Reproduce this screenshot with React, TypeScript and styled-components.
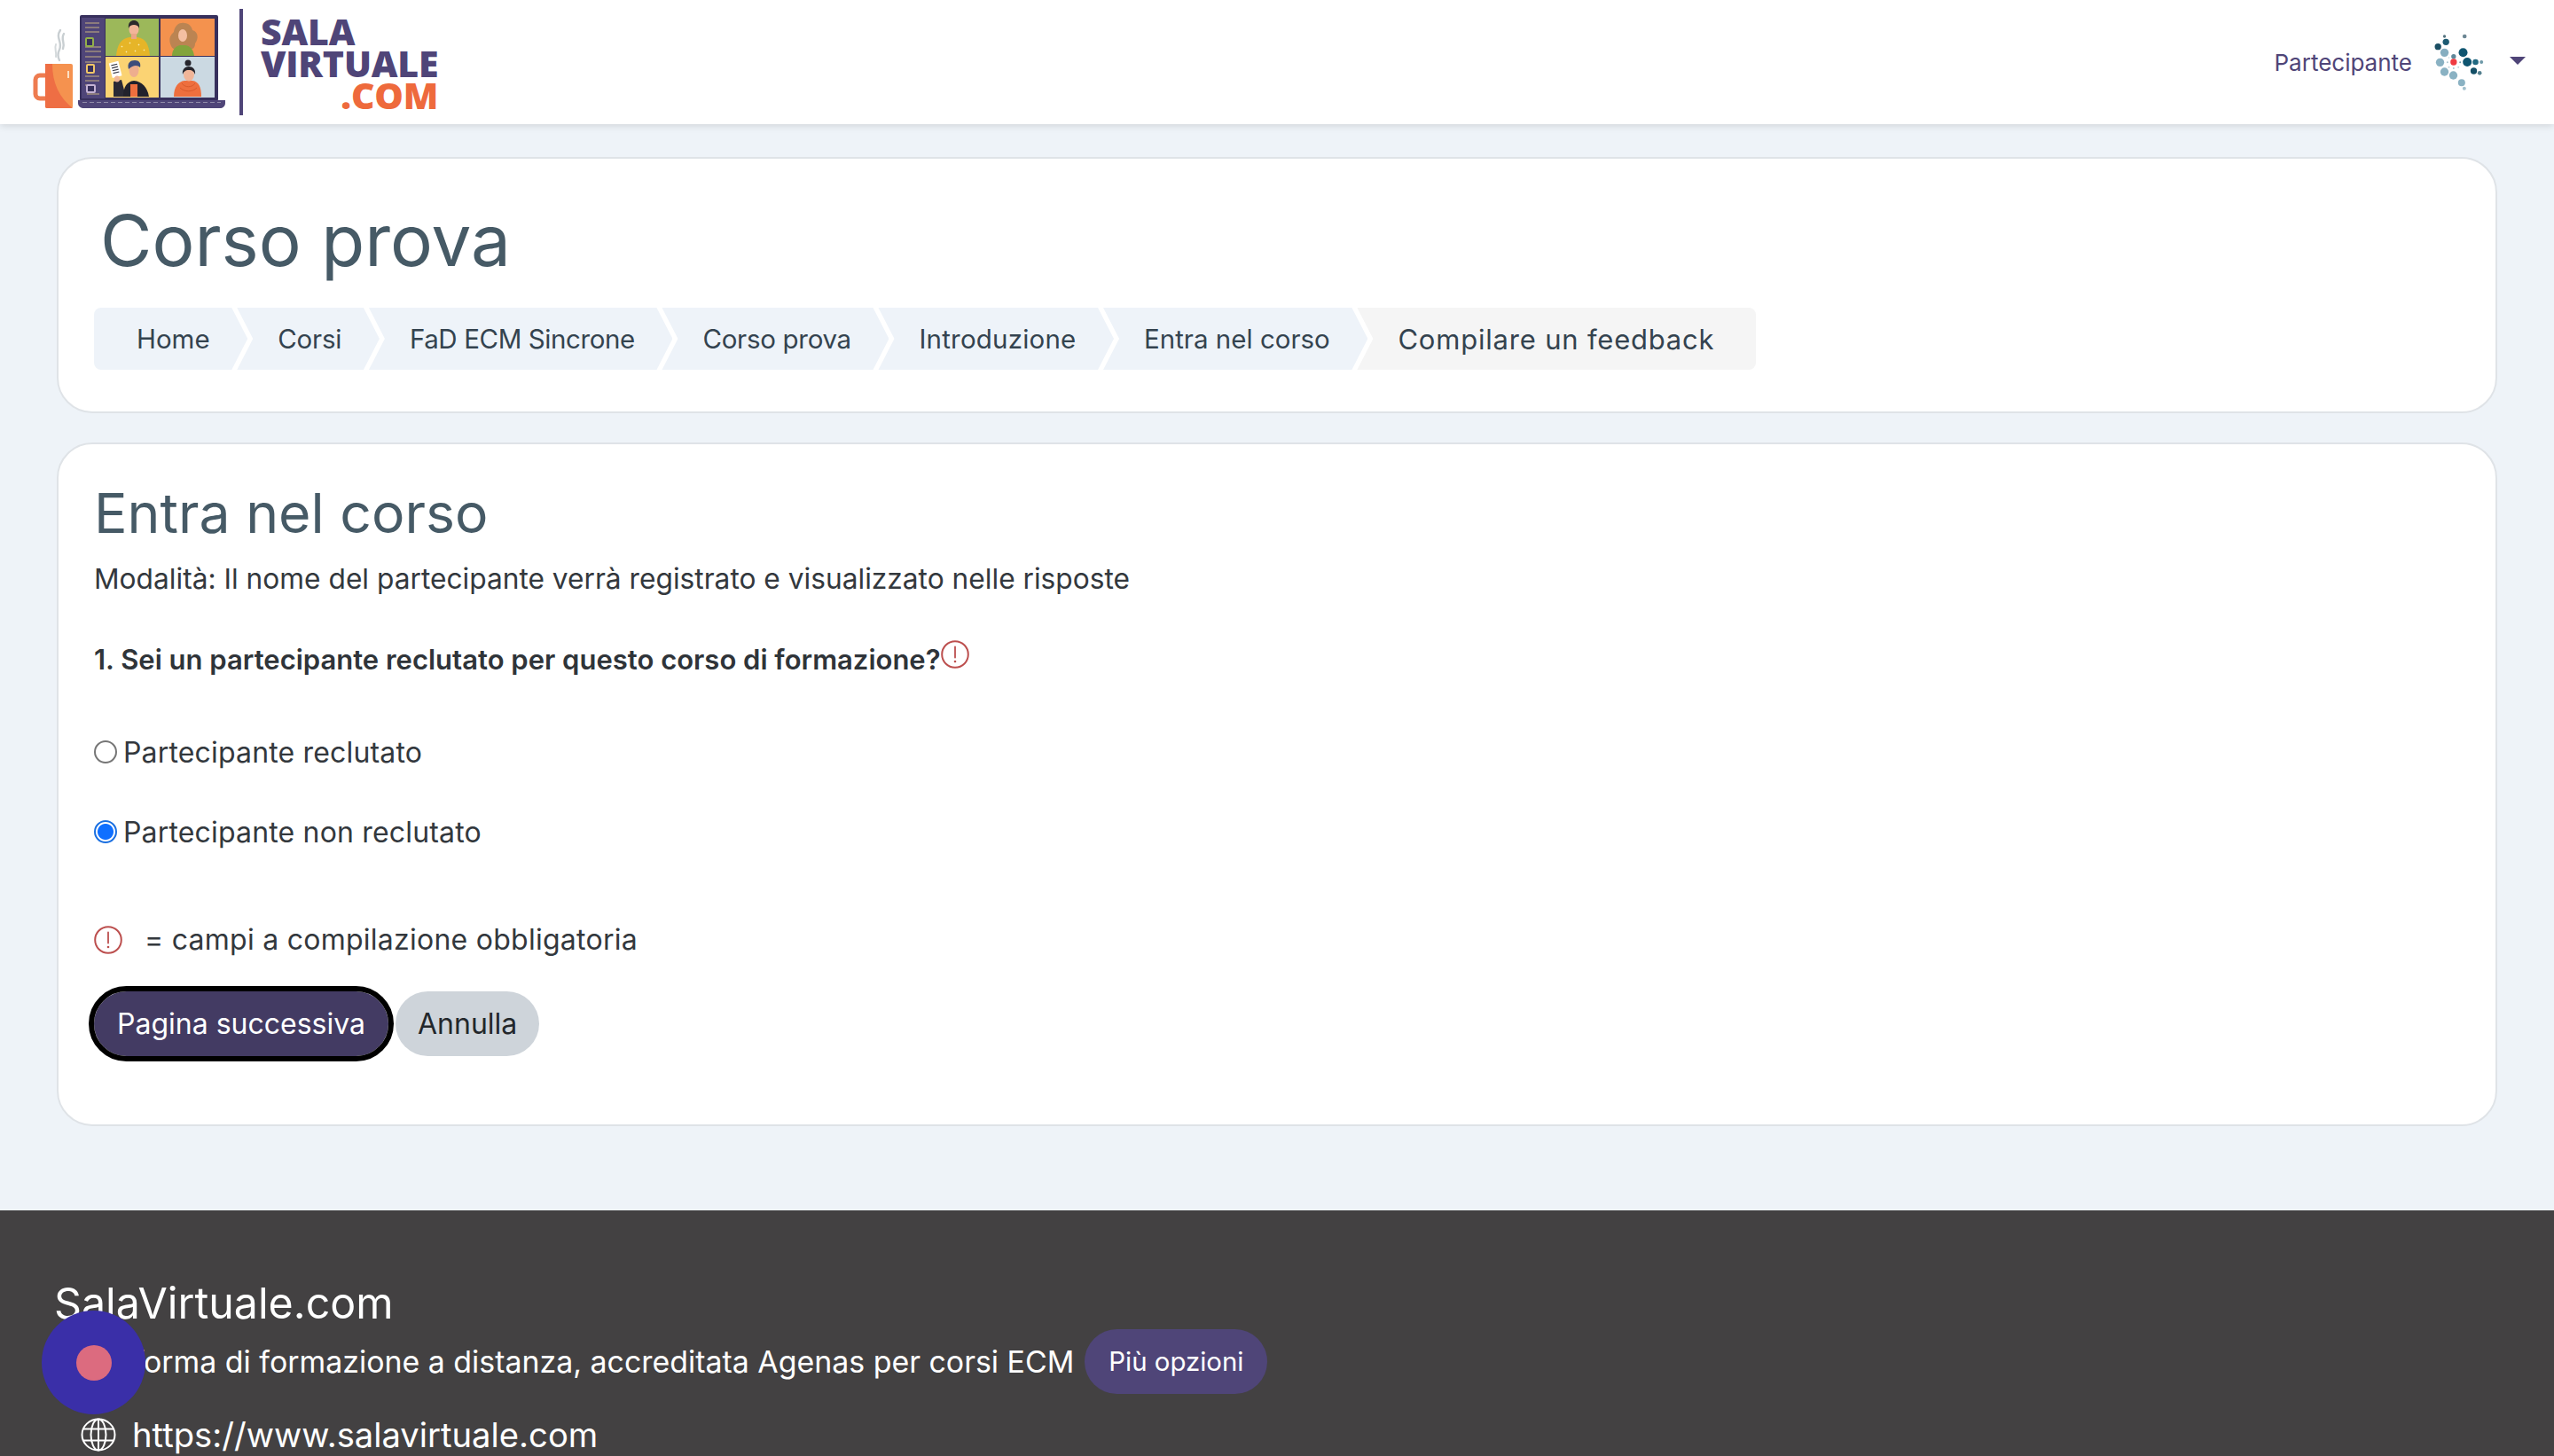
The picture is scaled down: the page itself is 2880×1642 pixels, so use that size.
import styled, { createGlobalStyle } from 'styled-components'

const GlobalStyle = createGlobalStyle`
  html, body {
    margin: 0;
    padding: 0;
    height: 100%;
    overflow: hidden;
    background: #eef3f8;
  }
  body {
    font-family: Inter, "Open Sans", sans-serif;
    color: #33383d;
  }
`

const crumbs: [string, number][] = [
  ['Home', 0],
  ['Corsi', -0.2],
  ['FaD ECM Sincrone', -0.4],
  ['Corso prova', -0.3],
  ['Introduzione', 0.2],
  ['Entra nel corso', 0],
]

function Logo() {
  return (
    <LogoGraphic viewBox="34 0 224 140">
      {/* steam */}
      <path d="M68 34c-6 9 3 13-1 22-2 4-2 8 0 12M72 38c-4 7 2 10-1 17" fill="none" stroke="#c9cfd2" strokeWidth="2.4" strokeLinecap="round" />
      <path d="M63 50c-2 5 1 8 0 14" fill="none" stroke="#d5dadc" strokeWidth="2" strokeLinecap="round" />
      {/* mug */}
      <rect x="40" y="85" width="16" height="26" rx="5" fill="none" stroke="#ee7c50" strokeWidth="5" />
      <rect x="51" y="72" width="31" height="50" rx="2" fill="#f5924f" />
      <path d="M51 72h8c0 22 8 38 23 50H53a2 2 0 0 1-2-2z" fill="#ee6e44" />
      <rect x="76" y="80" width="2" height="8" fill="#fbe0c4" />
      {/* laptop */}
      <rect x="90" y="17" width="156" height="97" rx="2" fill="#37305c" />
      <rect x="92" y="20" width="26" height="91" fill="#4f4578" />
      <path d="M96 26h16M96 31h16M96 36h16M96 53h18M96 58h18M96 64h18M96 70h18M96 86h16M96 91h16M96 96h8M98 106h14" stroke="#a08d7e" strokeWidth="1.4" />
      <rect x="97" y="43" width="8" height="9" rx="1" fill="#37305c" stroke="#93b04a" strokeWidth="2" />
      <rect x="98" y="73" width="8" height="9" rx="1" fill="#37305c" stroke="#f1c667" strokeWidth="2" />
      <rect x="98" y="96" width="9" height="8" rx="1" fill="#37305c" stroke="#c4b2d4" strokeWidth="2" />
      <rect x="119" y="21" width="60" height="42" fill="#9cb85a" />
      <rect x="181" y="21" width="61" height="42" fill="#f4924e" />
      <rect x="119" y="64" width="60" height="46" fill="#fbd373" />
      <rect x="181" y="64" width="61" height="46" fill="#cbd9e2" />
      {/* green tile */}
      <path d="M131 63c1-13 6-20 15-21h9c9 1 13 8 14 21z" fill="#e6b528" />
      <path d="M137 52l1 1M146 48l1 1M156 50l1 1M162 56l1 1M142 58l1 1M152 57l1 1" stroke="#fbeeb5" strokeWidth="1.5" />
      <ellipse cx="151" cy="33" rx="5.500" ry="7" fill="#f2b598" />
      <rect x="148" y="38" width="6" height="6" fill="#eaa688" />
      <path d="M145 32c-1-7 3-9 6-9s7 2 6 9c-1-3-3-4-6-4s-5 1-6 4z" fill="#2c2a2c" />
      {/* orange tile */}
      <path d="M193 52c-4-9 0-13 3-16 1-8 7-11 12-10 5 0 8 4 9 8 7 2 7 10 3 15 0 5-3 7-7 7h-14c-3 0-5-2-6-4z" fill="#bb8452" />
      <ellipse cx="206" cy="40" rx="5" ry="7" fill="#f4bfa2" />
      <path d="M194 63c0-7 4-11 9-12h6c6 1 9 5 10 12z" fill="#82a43c" />
      {/* yellow tile */}
      <path d="M128 109V92l9-2 5 19z" fill="#2a2a36" />
      <path d="M139 109c0-11 4-17 12-18 9 1 15 7 17 18z" fill="#22222c" />
      <rect x="147" y="95" width="8" height="14" fill="#ee6f3e" />
      <ellipse cx="151" cy="79" rx="5.500" ry="8" fill="#eeae8e" />
      <path d="M145 78c-2-7 2-10 7-10s7 3 6 8c-3-3-8-3-13 2z" fill="#3d4d7b" />
      <g transform="rotate(-14 130 80)">
        <rect x="125" y="70" width="11" height="17" fill="#fff" />
        <path d="M127 73h7M127 76h7M127 79h7M127 82h7" stroke="#3c3c48" strokeWidth="1.2" />
      </g>
      <ellipse cx="132" cy="89" rx="3" ry="3.500" fill="#f1b596" />
      {/* blue tile */}
      <path d="M196 109c0-11 5-17 12-18h9c7 1 10 7 10 18z" fill="#ee6f3e" />
      <path d="M205 94c4 5 11 5 15 0M203 99c5 5 14 5 19 0" fill="none" stroke="#d85a2c" strokeWidth="1" />
      <circle cx="212" cy="71" r="3.500" fill="#26252c" />
      <ellipse cx="213" cy="84" rx="6" ry="7.500" fill="#f0b598" />
      <path d="M206 84c-1-6 3-9 7-9s8 3 7 9c-1-3-3-5-7-5s-6 2-7 5z" fill="#26252c" />
      {/* base */}
      <path d="M88 113h166v3c0 4-3 6-6 6H95c-4 0-7-2-7-6z" fill="#4f4578" />
      <path d="M93 115.500h156" stroke="#8f8aa8" strokeWidth="1.2" strokeDasharray="5 3" />
    </LogoGraphic>
  )
}

function Avatar() {
  const dots: [number, number, number, string][] = [
    [765, 128, 5, '#54727f'], [833, 128, 7, '#6c8794'], [770, 147, 11, '#1c5a72'], [743, 163, 11, '#1b4f64'],
    [765, 183, 14, '#86aec0'], [828, 183, 15, '#0f5570'], [796, 196, 8, '#5f8799'], [750, 216, 14, '#8ab2c3'],
    [842, 215, 15, '#0f5570'], [870, 215, 10, '#216880'], [890, 215, 6, '#6f9aa9'], [765, 248, 14, '#8ab2c3'],
    [795, 260, 14, '#8ab2c3'], [864, 245, 11, '#154f66'], [884, 252, 7, '#55808f'], [823, 285, 12, '#8ab2c3'],
    [832, 304, 6, '#a3c1cd'], [775, 216, 3, '#a9c4cf'], [818, 216, 3, '#6f9aa9'], [796, 236, 3, '#a9c4cf'],
    [780, 232, 3, '#c0d3db'], [812, 232, 3, '#c0d3db'], [780, 200, 2, '#c0d3db'], [796, 215, 11, '#ef3b42'],
  ]
  return (
    <AvatarGraphic viewBox="710 110 200 210">
      {dots.map(([cx, cy, r, fill], i) => (
        <circle key={i} cx={cx} cy={cy} r={r} fill={fill} />
      ))}
    </AvatarGraphic>
  )
}

function RequiredIcon() {
  return (
    <RequiredGraphic viewBox="0 0 32 32">
      <circle cx="16" cy="16" r="14.800" fill="none" stroke="#bc4f4e" strokeWidth="2" />
      <path d="M16 7.500v12" stroke="#bc4f4e" strokeWidth="1.800" strokeLinecap="round" />
      <circle cx="16" cy="24" r="1.300" fill="#bc4f4e" />
    </RequiredGraphic>
  )
}

function GlobeIcon() {
  return (
    <GlobeGraphic viewBox="0 0 40 38" fill="none" stroke="#fff" strokeWidth="2">
      <ellipse cx="20" cy="19" rx="18.500" ry="17.500" />
      <ellipse cx="20" cy="19" rx="8.500" ry="17.500" />
      <path d="M20 1.500v35M3 12.500h34M3 25.500h34" />
    </GlobeGraphic>
  )
}

export default function App() {
  return (
    <Page>
      <GlobalStyle />
      <Header>
        <LogoLink>
          <Logo />
          <LogoDivider />
          <LogoText>
            <LogoLine>SALA</LogoLine>
            <LogoLine>VIRTUALE</LogoLine>
            <LogoLine $accent>.COM</LogoLine>
          </LogoText>
        </LogoLink>
        <UserMenu>
          <UserName>Partecipante</UserName>
          <Avatar />
          <Caret />
        </UserMenu>
      </Header>

      <Main>
        <TitleCard>
          <PageTitle>Corso prova</PageTitle>
          <Breadcrumb>
            {crumbs.map(([label, spacing]) => (
              <Crumb key={label} $spacing={spacing}>
                {label}
              </Crumb>
            ))}
            <LastCrumb>Compilare un feedback</LastCrumb>
          </Breadcrumb>
        </TitleCard>

        <FormCard>
          <SectionTitle>Entra nel corso</SectionTitle>
          <Mode>Modalità: Il nome del partecipante verrà registrato e visualizzato nelle risposte</Mode>
          <Question>
            1. Sei un partecipante reclutato per questo corso di formazione?
            <RequiredIcon />
          </Question>
          <Options>
            <Option>
              <Radio type="radio" name="r" />
              Partecipante reclutato
            </Option>
            <Option>
              <Radio type="radio" name="r" defaultChecked />
              Partecipante non reclutato
            </Option>
          </Options>
          <Legend>
            <RequiredIcon />
            <span>= campi a compilazione obbligatoria</span>
          </Legend>
          <Buttons>
            <PrimaryButton>Pagina successiva</PrimaryButton>
            <SecondaryButton>Annulla</SecondaryButton>
          </Buttons>
        </FormCard>
      </Main>

      <Footer>
        <FooterTitle>SalaVirtuale.com</FooterTitle>
        <FooterLine>
          <span>Piattaforma di formazione a distanza, accreditata Agenas per corsi ECM</span>
          <MoreButton>Più opzioni</MoreButton>
        </FooterLine>
        <FooterLink>
          <GlobeIcon />
          <span>https://www.salavirtuale.com</span>
        </FooterLink>
      </Footer>

      <RecordDot>
        <RecordCore />
      </RecordDot>
    </Page>
  )
}

const Page = styled.div`
  position: relative;
  height: 1642px;
  overflow: hidden;
  background: #eef3f8;
`

const Header = styled.header`
  position: relative;
  display: flex;
  align-items: center;
  justify-content: space-between;
  height: 140px;
  padding: 0 32px 0 34px;
  background: #fff;
  box-shadow: 0 2px 8px rgba(0, 0, 0, 0.12);
`

const LogoLink = styled.div`
  display: flex;
  align-items: center;
`

const LogoGraphic = styled.svg`
  width: 224px;
  height: 140px;
  filter: blur(0.5px);
`

const LogoDivider = styled.div`
  width: 4px;
  height: 120px;
  margin-left: 12px;
  background: #4f4578;
`

const LogoText = styled.div`
  display: flex;
  flex-direction: column;
  margin-left: 20px;
  padding-top: 2px;
  font-family: 'Open Sans', sans-serif;
  font-weight: 800;
  font-size: 41px;
  letter-spacing: -0.2px;
  line-height: 36px;
  color: #4f4578;
`

const LogoLine = styled.span<{ $accent?: boolean }>`
  color: ${(p) => (p.$accent ? '#ee6a3c' : 'inherit')};
  text-align: ${(p) => (p.$accent ? 'right' : 'left')};
`

const UserMenu = styled.div`
  display: flex;
  align-items: center;
`

const UserName = styled.span`
  font-size: 26px;
  color: #4f4578;
`

const AvatarGraphic = styled.svg`
  width: 67px;
  height: 70px;
  margin-left: 18px;
  filter: blur(0.5px);
`

const Caret = styled.span`
  width: 0;
  height: 0;
  margin: 0 0 4px 25px;
  border-left: 9px solid transparent;
  border-right: 9px solid transparent;
  border-top: 9px solid #4f4578;
`

const Main = styled.main`
  display: flex;
  flex-direction: column;
  gap: 33px;
  padding: 37px 64px 95px;
`

const Card = styled.section`
  background: #fff;
  border: 2px solid #dfe3e7;
  border-radius: 40px;
`

const TitleCard = styled(Card)`
  padding: 42px 40px 47px;
`

const FormCard = styled(Card)`
  padding: 38px 40px 77px;
`

const PageTitle = styled.h1`
  margin: 0 0 26px 7px;
  font-size: 80px;
  font-weight: 400;
  line-height: 100px;
  color: #465a66;
`

const Breadcrumb = styled.nav`
  display: flex;
  width: fit-content;
  font-size: 29.5px;
  color: #34434f;
`

const Crumb = styled.span<{ $spacing: number }>`
  display: flex;
  align-items: center;
  height: 70px;
  padding: 0 42.6px 0 46px;
  margin-left: -12px;
  letter-spacing: ${(p) => p.$spacing}px;
  background: #eef3f9;
  clip-path: polygon(0 0, calc(100% - 18px) 0, 100% 50%, calc(100% - 18px) 100%, 0 100%, 18px 50%);

  &:first-child {
    margin-left: 0;
    padding-left: 48px;
    border-radius: 8px 0 0 8px;
    clip-path: polygon(0 0, calc(100% - 18px) 0, 100% 50%, calc(100% - 18px) 100%, 0 100%);
  }
`

const LastCrumb = styled.span`
  display: flex;
  align-items: center;
  height: 70px;
  padding: 0 47px 0 46px;
  margin-left: -12px;
  font-size: 31px;
  letter-spacing: 0.8px;
  background: #f5f5f5;
  border-radius: 0 8px 8px 0;
  clip-path: polygon(0 0, 100% 0, 100% 100%, 0 100%, 18px 50%);
`

const SectionTitle = styled.h2`
  margin: 0;
  font-size: 62.5px;
  font-weight: 400;
  line-height: 78px;
  color: #465a66;
`

const Mode = styled.p`
  margin: 13px 0 0;
  font-size: 31.7px;
  line-height: 46px;
`

const Question = styled.div`
  display: flex;
  align-items: flex-start;
  margin-top: 45px;
  font-size: 31px;
  font-weight: 600;
  line-height: 46px;
  color: #2f3439;

  svg {
    margin-top: 1px;
  }
`

const RequiredGraphic = styled.svg`
  flex: none;
  width: 32px;
  height: 32px;
`

const Options = styled.div`
  display: flex;
  flex-direction: column;
  gap: 44px;
  margin-top: 58px;
`

const Option = styled.label`
  display: flex;
  align-items: center;
  gap: 7px;
  height: 46px;
  font-size: 32px;
  letter-spacing: 0.17px;
`

const Radio = styled.input`
  flex: none;
  width: 26px;
  height: 26px;
  margin: 0;
  appearance: none;
  border: 2px solid #767676;
  border-radius: 50%;
  background: #fff;

  &:checked {
    border-color: #1a6fe0;
    background: radial-gradient(circle, #0f6fff 0 8.5px, #fff 9.5px);
  }
`

const Legend = styled.div`
  display: flex;
  align-items: center;
  gap: 25px;
  margin-top: 76px;
  font-size: 32px;
  letter-spacing: 0.26px;
  line-height: 46px;
`

const Buttons = styled.div`
  display: flex;
  align-items: center;
  gap: 8px;
  margin-top: 35px;
`

const PrimaryButton = styled.button`
  height: 73px;
  padding: 0 26px;
  border: 0;
  border-radius: 37px;
  background: #433b63;
  color: #fff;
  font: 400 32px Inter, sans-serif;
  outline: 6px solid #000;
`

const SecondaryButton = styled.button`
  height: 73px;
  padding: 0 25px;
  border: 0;
  border-radius: 37px;
  background: #ced4da;
  color: #23272b;
  font: 400 32px Inter, sans-serif;
`

const Footer = styled.footer`
  display: flex;
  flex-direction: column;
  height: 278px;
  padding: 77px 61px 0;
  background: #434142;
  color: #fff;
`

const FooterTitle = styled.div`
  font-size: 48.3px;
  line-height: 56px;
`

const FooterLine = styled.div`
  display: flex;
  align-items: center;
  gap: 12px;
  margin-top: 1px;
  font-size: 33.9px;
`

const MoreButton = styled.button`
  height: 73px;
  padding: 0 27px;
  border: 0;
  border-radius: 37px;
  background: #4f4578;
  color: #fff;
  font: 400 29.4px Inter, sans-serif;
`

const FooterLink = styled.div`
  display: flex;
  align-items: center;
  gap: 18px;
  margin: 23px 0 0 30px;
  font-size: 38.2px;
`

const GlobeGraphic = styled.svg`
  width: 40px;
  height: 38px;
`

const RecordDot = styled.div`
  position: absolute;
  left: 47px;
  top: 1478px;
  display: flex;
  align-items: center;
  justify-content: center;
  width: 117px;
  height: 117px;
  border-radius: 50%;
  background: #3a2fa8;
`

const RecordCore = styled.div`
  width: 40px;
  height: 40px;
  border-radius: 50%;
  background: #dc6b7f;
`
